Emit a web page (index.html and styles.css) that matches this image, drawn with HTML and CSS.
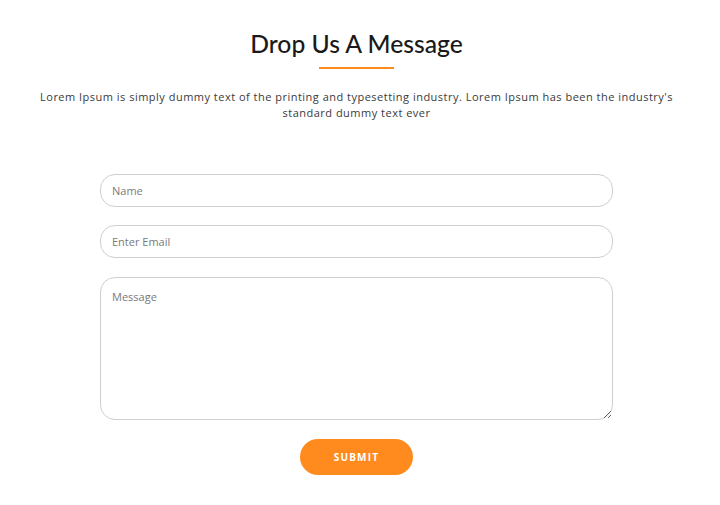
FILE: index.html
```html
<!DOCTYPE html>
<html>
<head>
<meta charset="utf-8">
<link rel="stylesheet" href="styles.css">
</head>
<body>
<div class="page">
  <h1 class="title">Drop Us A Message</h1>
  <div class="rule"></div>
  <p class="lead">Lorem Ipsum is simply dummy text of the printing and typesetting industry. Lorem Ipsum has been the industry's standard dummy text ever</p>
  <form class="form">
    <input class="field" type="text" placeholder="Name">
    <input class="field" type="text" placeholder="Enter Email">
    <textarea class="field area" placeholder="Message"></textarea>
    <button class="submit" type="button">SUBMIT</button>
  </form>
</div>
</body>
</html>
```

FILE: styles.css
```css
html, body {
  margin: 0;
  padding: 0;
  background: #fff;
}
.page {
  width: 713px;
  display: flex;
  flex-direction: column;
  align-items: center;
  padding-top: 29px;
}
.title {
  margin: 0;
  font-family: Lato, "Open Sans", sans-serif;
  font-weight: 500;
  font-size: 24.7px;
  line-height: 30px;
  color: #1a1a1a;
}
.rule {
  width: 75px;
  height: 2px;
  background: #ff8a1d;
  margin-top: 8px;
}
.lead {
  margin: 20px 0 0;
  width: 645px;
  text-align: center;
  font-family: "Open Sans", sans-serif;
  font-size: 11px;
  line-height: 16px;
  letter-spacing: 0.49px;
  color: #3a3a3a;
}
.form {
  margin-top: 53px;
  width: 513px;
  display: flex;
  flex-direction: column;
  align-items: center;
}
.field {
  box-sizing: border-box;
  width: 513px;
  height: 33px;
  border: 1px solid #cfcfcf;
  border-radius: 15px;
  padding: 0 11px;
  margin: 0 0 18px;
  font-family: "Open Sans", sans-serif;
  font-size: 11px;
  color: #333;
  background: #fff;
  outline: none;
}
.field + .field {
  margin-bottom: 19px;
}
.field::placeholder {
  color: #7a7a7a;
}
.area {
  height: 143px;
  padding-top: 11px;
  resize: vertical;
  display: block;
}
.submit {
  margin-top: 0;
  width: 113px;
  height: 36px;
  border: none;
  border-radius: 18px;
  background: #ff8a1d;
  color: #fff;
  font-family: "Open Sans", sans-serif;
  font-weight: 700;
  font-size: 10px;
  letter-spacing: 1.2px;
}
```
